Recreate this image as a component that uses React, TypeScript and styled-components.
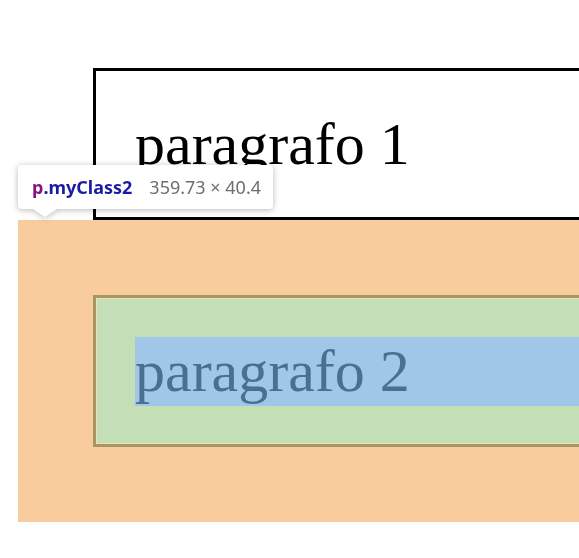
import React from "react";
import styled, { createGlobalStyle } from "styled-components";

const Global = createGlobalStyle`
  html, body { margin: 0; padding: 0; background: #fff; overflow: hidden; }
  body { width: 579px; height: 558px; }
`;

const Page = styled.div`
  position: relative;
  width: 579px;
  height: 558px;
  overflow: hidden;
  padding-left: 18px;
  box-sizing: border-box;
  font-family: "Liberation Serif", "Times New Roman", serif;
`;

const Paragraph = styled.p`
  margin: 68px 0 0 75px;
  width: 900px;
  border: 3px solid #000;
  padding: 39px 39px 38px;
  font-size: 60px;
  line-height: normal;
  color: #000;
`;

const MarginBox = styled.div`
  width: 1200px;
  padding: 75px;
  background: #f9cc9d;
`;

const BorderBox = styled.div`
  width: 900px;
  border: 3px solid #a89765;
  background: #c4dfb7;
  box-shadow: inset 0 0 0 1px #e9e3b6;
  padding: 39px 39px 38px;
`;

const ContentBox = styled.div`
  background: #a0c6e8;
  color: #496f91;
  font-size: 60px;
  line-height: normal;
  white-space: nowrap;
`;

const Tooltip = styled.div`
  position: absolute;
  left: 18px;
  top: 165px;
  width: 255px;
  height: 44px;
  box-sizing: border-box;
  padding: 0 14px;
  display: flex;
  align-items: center;
  gap: 17px;
  background: #fff;
  border-radius: 4px;
  filter: drop-shadow(0 1px 3px rgba(0, 0, 0, 0.28));
  font-family: "Noto Sans", "Open Sans", sans-serif;
  font-size: 18px;
  white-space: nowrap;

  &::after {
    content: "";
    position: absolute;
    left: 15px;
    bottom: -8px;
    border-left: 12px solid transparent;
    border-right: 12px solid transparent;
    border-top: 8px solid #fff;
  }
`;

const Selector = styled.span`
  font-weight: 700;
  color: #1a1aa6;
`;

const Tag = styled.span`
  color: #881280;
`;

const Size = styled.span`
  color: #6e6e6e;
`;

export default function App() {
  return (
    <>
      <Global />
      <Page>
        <Paragraph>paragrafo 1</Paragraph>
        <MarginBox>
          <BorderBox>
            <ContentBox>paragrafo 2</ContentBox>
          </BorderBox>
        </MarginBox>
        <Tooltip>
          <Selector>
            <Tag>p</Tag>.myClass2
          </Selector>
          <Size>359.73 × 40.4</Size>
        </Tooltip>
      </Page>
    </>
  );
}
